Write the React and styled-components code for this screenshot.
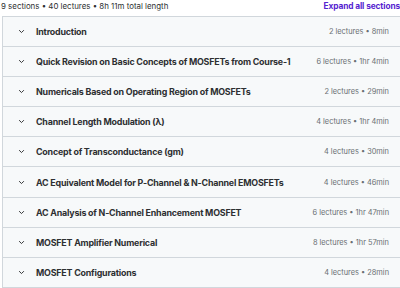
import React from 'react';
import styled, { createGlobalStyle } from 'styled-components';

const GlobalStyle = createGlobalStyle`
  html, body {
    margin: 0;
    padding: 0;
    overflow: hidden;
    background: #fff;
  }
  body {
    font-family: Inter, "Noto Sans", sans-serif;
    color: #2d2f31;
  }
`;

const Page = styled.div`
  width: 420px;
  padding: 0 0 0 2px;
`;

const Summary = styled.div`
  display: flex;
  justify-content: space-between;
  align-items: center;
  height: 16px;
  margin-top: -2px;
  margin-left: -1px;
`;

const Stats = styled.span`
  font-size: 7.9px;
  color: #2d2f31;
`;

const ExpandAll = styled.button`
  border: 0;
  background: none;
  padding: 0;
  margin-right: 22px;
  font-family: inherit;
  font-size: 8.3px;
  font-weight: 700;
  letter-spacing: -0.1px;
  color: #5624d0;
  cursor: pointer;
`;

const SectionList = styled.div`
  border: 1px solid #d1d7dc;
  border-bottom: 0;
  margin-top: 2px;
`;

const SectionRow = styled.div`
  display: flex;
  align-items: center;
  height: 29.1px;
  padding: 0 32px 0 14px;
  background: #f7f9fa;
  border-bottom: 1px solid #d1d7dc;
`;

const Chevron = styled.svg`
  width: 7px;
  height: 7px;
  flex: none;
  margin-right: 11px;
  margin-left: 1px;
`;

const Title = styled.span`
  flex: 1;
  font-size: 8.9px;
  font-weight: 700;
  letter-spacing: -0.2px;
  color: #2d2f31;
  white-space: nowrap;
`;

const Meta = styled.span`
  font-size: 7.4px;
  color: #6a6f73;
  white-space: nowrap;
`;

const sections = [
  ['Introduction', '2 lectures • 8min'],
  ['Quick Revision on Basic Concepts of MOSFETs from Course-1', '6 lectures • 1hr 4min'],
  ['Numericals Based on Operating Region of MOSFETs', '2 lectures • 29min'],
  ['Channel Length Modulation (λ)', '4 lectures • 1hr 4min'],
  ['Concept of Transconductance (gm)', '4 lectures • 30min'],
  ['AC Equivalent Model for P-Channel & N-Channel EMOSFETs', '4 lectures • 46min'],
  ['AC Analysis of N-Channel Enhancement MOSFET', '6 lectures • 1hr 47min'],
  ['MOSFET Amplifier Numerical', '8 lectures • 1hr 57min'],
  ['MOSFET Configurations', '4 lectures • 28min'],
];

const App = () => (
  <Page>
    <GlobalStyle />
    <Summary>
      <Stats>9 sections • 40 lectures • 8h 11m total length</Stats>
      <ExpandAll>Expand all sections</ExpandAll>
    </Summary>
    <SectionList>
      {sections.map(([title, meta]) => (
        <SectionRow key={title}>
          <Chevron viewBox="0 0 10 10">
            <path
              d="M2 3.5 L5 6.5 L8 3.5"
              fill="none"
              stroke="#2d2f31"
              strokeWidth="1.4"
              strokeLinecap="round"
              strokeLinejoin="round"
            />
          </Chevron>
          <Title>{title}</Title>
          <Meta>{meta}</Meta>
        </SectionRow>
      ))}
    </SectionList>
  </Page>
);

export default App;
